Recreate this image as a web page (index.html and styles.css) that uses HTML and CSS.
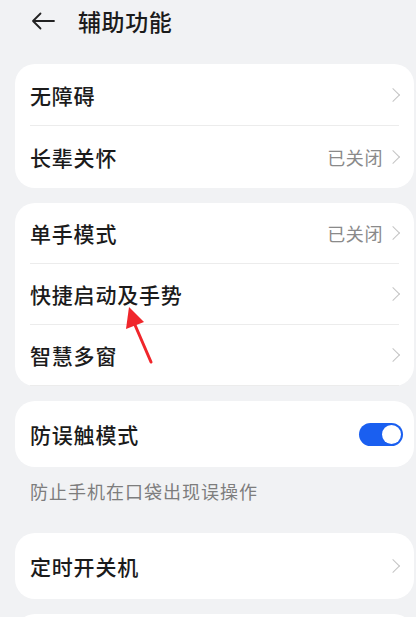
FILE: index.html
```html
<!DOCTYPE html>
<html lang="zh">
<head>
<meta charset="utf-8">
<link rel="stylesheet" href="styles.css">
</head>
<body>
<div class="page">
  <header class="topbar">
    <svg class="back" width="24" height="18" viewBox="0 0 24 18"><path d="M23 9H2M9.5 1.5L2 9l7.5 7.5" fill="none" stroke="#222" stroke-width="1.8" stroke-linecap="round" stroke-linejoin="round"/></svg>
    <h1 class="title">辅助功能</h1>
  </header>

  <section class="card card1">
    <div class="row"><span class="label">无障碍</span><span class="right"><span class="chev"></span></span></div>
    <div class="row"><span class="label">长辈关怀</span><span class="right"><span class="value">已关闭</span><span class="chev"></span></span></div>
  </section>

  <section class="card card2">
    <div class="row"><span class="label">单手模式</span><span class="right"><span class="value">已关闭</span><span class="chev"></span></span></div>
    <div class="row"><span class="label">快捷启动及手势</span><span class="right"><span class="chev"></span></span></div>
    <div class="row"><span class="label">智慧多窗</span><span class="right"><span class="chev"></span></span></div>
    <svg class="annot" width="40" height="60" viewBox="0 0 40 60"><path d="M30 57L14 20" stroke="#f0262b" stroke-width="3" stroke-linecap="round"/><path d="M8 2L5 24L23 17Z" fill="#f0262b"/></svg>
  </section>

  <section class="card">
    <div class="row single"><span class="label">防误触模式</span><span class="toggle"><span class="knob"></span></span></div>
  </section>
  <p class="caption">防止手机在口袋出现误操作</p>

  <section class="card">
    <div class="row single"><span class="label">定时开关机</span><span class="right"><span class="chev"></span></span></div>
  </section>

  <section class="card last"></section>
</div>
</body>
</html>
```
FILE: styles.css
```css
html, body {
  margin: 0;
  padding: 0;
  background: #f1f2f4;
}
body {
  font-family: "Noto Sans CJK SC", "Noto Sans", sans-serif;
  color: #1b1b1b;
  overflow: hidden;
  height: 617px;
}
.page {
  padding: 0 2px 0 15px;
}
.topbar {
  display: flex;
  align-items: center;
  height: 42px;
  margin-bottom: 22px;
}
.back {
  margin-left: 16px;
  margin-right: 23px;
}
.title {
  margin: 0;
  font-size: 23px;
  font-weight: 500;
  color: #1b1b1b;
  letter-spacing: 0.6px;
}
.card {
  background: #fff;
  border-radius: 20px;
  padding: 0 15px;
  margin-bottom: 15px;
  position: relative;
}
.row {
  display: flex;
  align-items: center;
  justify-content: space-between;
  height: 61px;
  border-bottom: 1px solid #ececec;
}
.row:last-child {
  border-bottom: none;
}
.card1 .row:last-child {
  height: 62px;
}
.card2 .row {
  height: 60px;
}
.card2 .row:last-child {
  height: 61px;
}
.single {
  height: 66px;
}
.label {
  font-size: 21px;
  font-weight: 500;
  letter-spacing: 0.8px;
}
.right {
  display: flex;
  align-items: center;
}
.value {
  font-size: 18px;
  color: #8a8a8a;
  margin-right: 5px;
  letter-spacing: 0.6px;
}
.chev {
  width: 9px;
  height: 9px;
  border-top: 1.6px solid #c4c4c4;
  border-right: 1.6px solid #c4c4c4;
  transform: rotate(45deg);
  margin-right: 1px;
}
.toggle {
  width: 44px;
  height: 23px;
  background: #1a5ff0;
  border-radius: 12px;
  display: flex;
  align-items: center;
  justify-content: flex-end;
  padding: 0 2px;
  box-sizing: border-box;
  margin-right: -4px;
}
.knob {
  width: 19px;
  height: 19px;
  border-radius: 50%;
  background: #fff;
}
.caption {
  margin: 0 0 33px 15px;
  font-size: 18px;
  line-height: 18px;
  height: 18px;
  color: #7d7d7d;
  letter-spacing: 1px;
}
.annot {
  position: absolute;
  left: 106px;
  top: 102px;
}
.last {
  height: 40px;
}
```
